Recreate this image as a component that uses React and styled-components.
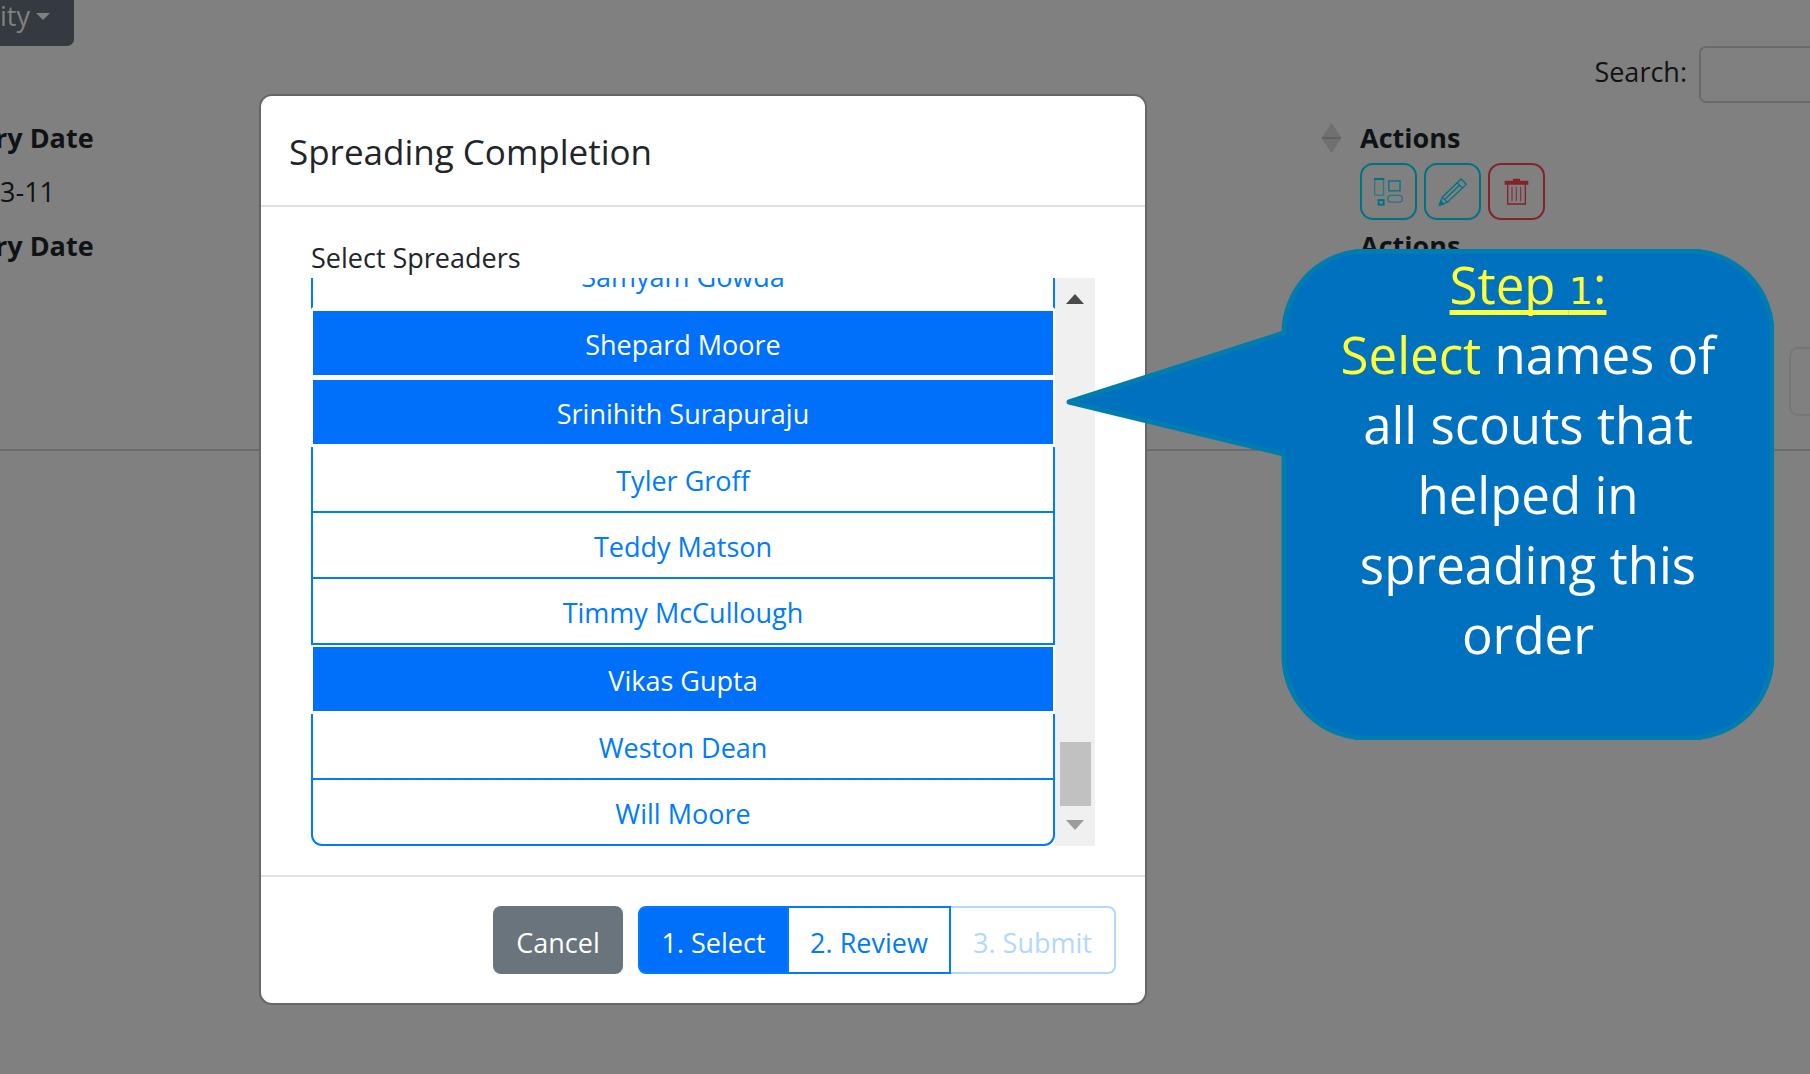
import React, { useState } from "react";
import styled, { createGlobalStyle, css } from "styled-components";

const GlobalStyle = createGlobalStyle`
  *, *::before, *::after { box-sizing: border-box; }
  body {
    margin: 0;
    background: #808080;
    color: #101315;
    font-family: "Open Sans", "Noto Sans", sans-serif;
    font-size: 27px;
    line-height: 40px;
  }
  button, input { font: inherit; color: inherit; }
`;

const Page = styled.div`
  position: relative;
  min-height: 100vh;
  overflow: hidden;
`;

const Toolbar = styled.header`
  display: flex;
`;

const ActivityButton = styled.button`
  display: flex;
  align-items: center;
  gap: 6px;
  height: 46px;
  padding: 0 24px 14px 0;
  border: 0;
  border-radius: 0 0 7px 0;
  background: #343a3f;
  color: #808080;
`;

const Caret = styled.span`
  border: 7px solid transparent;
  border-top-color: #808080;
  border-bottom: 0;
`;

const SearchRow = styled.label`
  display: flex;
  justify-content: flex-end;
  gap: 12px;
  line-height: 52px;
`;

const SearchInput = styled.input`
  width: 111px;
  height: 57px;
  padding: 0 12px;
  border: 2px solid #676b6f;
  border-right: 0;
  border-radius: 7px 0 0 7px;
  background: transparent;
`;

const OrdersTable = styled.table`
  width: 100%;
  margin-top: 9px;
  border-collapse: collapse;
  table-layout: fixed;

  th, td {
    padding: 0;
    height: 51px;
    text-align: left;
    white-space: nowrap;
  }
  th { font-weight: 700; }
  th:first-child { text-indent: -5px; }
  td { height: 57px; }
`;

const ActionsColumn = styled.col`
  width: 488px;
`;

const ActionCell = styled.div`
  display: flex;
  align-items: center;
  gap: 7px;
  padding-left: ${(p) => (p.$sortable ? 0 : 38)}px;
`;

const SortIcon = styled.svg`
  width: 19px;
  height: 30px;
  margin-right: 12px;
`;

const IconButton = styled.button`
  display: flex;
  align-items: center;
  justify-content: center;
  width: 57px;
  height: 57px;
  padding: 0;
  border: 2px solid ${(p) => (p.$danger ? "#84212b" : "#007383")};
  border-radius: 13px;
  background: transparent;
  color: ${(p) => (p.$danger ? "#84212b" : "#007383")};
`;

const Pagination = styled.nav`
  display: flex;
  justify-content: flex-end;
  margin-top: 76px;
  padding-bottom: 33px;
  border-bottom: 2px solid #6b6b6b;
`;

const PageButton = styled.button`
  width: 21px;
  height: 69px;
  border: 2px solid #74777a;
  border-right: 0;
  border-radius: 9px 0 0 9px;
  background: transparent;
`;

const Overlay = styled.div`
  position: absolute;
  inset: 0;
  display: flex;
  align-items: flex-start;
  padding: 96px 0 0 261px;
`;

const Modal = styled.section`
  width: 884px;
  border-radius: 11px;
  background: #fff;
  color: #212529;
  box-shadow: 0 0 0 2px #666;
  overflow: hidden;
`;

const ModalHeader = styled.header`
  padding: 32px 28px 29px;
  border-bottom: 2px solid #dee2e6;
`;

const ModalTitle = styled.h1`
  margin: 0;
  font-size: 35px;
  font-weight: 400;
  line-height: 48px;
`;

const ModalBody = styled.fieldset`
  margin: 0;
  padding: 31px 50px 29px;
  border: 0;
`;

const ListLabel = styled.div`
`;

const Scroller = styled.div`
  display: flex;
  height: 568px;
`;

const NameList = styled.div`
  flex: 1;
  display: flex;
  flex-direction: column;
  justify-content: flex-end;
  overflow: hidden;
`;

const NameOption = styled.label`
  position: relative;
  flex: none;
  height: 66px;
  border: 2px solid #007bff;
  border-top: 0;
  color: #007bff;
  line-height: 68px;
  text-align: center;
  cursor: pointer;

  &:last-child { border-radius: 0 0 11px 11px; }

  ${(p) => p.$open && css`
    border-bottom-color: #fff;
  `}
  ${(p) => p.$selected && css`
    height: 69px;
    border-color: #fff;
    border-top: 2px solid #fff;
    border-bottom-width: 3px;
    background: #0070fb;
    color: #fff;
  `}
`;

const HiddenCheckbox = styled.input`
  position: absolute;
  inset: 0;
  margin: 0;
  opacity: 0;
`;

const ScrollTrack = styled.div`
  display: flex;
  flex-direction: column;
  align-items: center;
  justify-content: space-between;
  width: 40px;
  padding: 16px 0 16px;
  background: #f0f0f0;
`;

const ScrollArrow = styled.span`
  border: 9px solid transparent;
  border-width: ${(p) => (p.$up ? "0 9px 10px" : "10px 9px 0")};
  border-top-color: #9c9c9c;
  border-bottom-color: #4a4a4a;
`;

const ScrollThumb = styled.span`
  width: 31px;
  height: 64px;
  margin: auto 0 14px;
  background: #c1c1c1;
`;

const ModalFooter = styled.footer`
  display: flex;
  justify-content: flex-end;
  gap: 15px;
  padding: 29px;
  border-top: 2px solid #dee2e6;
`;

const CancelButton = styled.button`
  width: 130px;
  height: 68px;
  padding: 6px 0 0;
  border: 0;
  border-radius: 8px;
  background: #6a747c;
  color: #fff;
`;

const Steps = styled.div`
  display: flex;
`;

const StepButton = styled.button`
  width: ${(p) => p.$width}px;
  height: 68px;
  padding: 6px 0 0;
  border: 2px solid #007bff;
  background: ${(p) => (p.$active ? "#0070fb" : "#fff")};
  color: ${(p) => (p.$active ? "#fff" : "#007bff")};

  &:first-child { border-radius: 8px 0 0 8px; }
  &:last-child { border-left: 0; border-radius: 0 8px 8px 0; }
  & + & { border-left: 0; }
  &:disabled { border-color: #b3d7ff; color: #b3d7ff; }
`;

const Callout = styled.aside`
  position: absolute;
  top: 249px;
  right: 36px;
  width: 492px;
  height: 491px;
`;

const CalloutShape = styled.svg`
  position: absolute;
  top: 0;
  right: 0;
  width: 708px;
  height: 491px;
`;

const CalloutText = styled.p`
  position: relative;
  margin: 0;
  color: #fff;
  font-size: 51px;
  font-weight: 500;
  line-height: 70px;
  text-align: center;
`;

const Highlight = styled.span`
  color: #ffff38;
`;

const StepHeading = styled(Highlight)`
  text-decoration: underline;
  text-decoration-thickness: 5px;
  text-decoration-skip-ink: none;
  text-underline-offset: 6px;
`;

const OldStyleDigit = styled.span`
  font-family: "DejaVu Sans", sans-serif;
  font-size: 38px;
  line-height: 1;
`;

const names = [
  "Samyam Gowda",
  "Shepard Moore",
  "Srinihith Surapuraju",
  "Tyler Groff",
  "Teddy Matson",
  "Timmy McCullough",
  "Vikas Gupta",
  "Weston Dean",
  "Will Moore",
];

function BoardIcon() {
  return (
    <svg width="31" height="29" viewBox="104 78 92 88" fill="none" stroke="currentColor" strokeWidth="4" aria-hidden="true">
      <rect x="108" y="84" width="27" height="49" opacity=".65" />
      <path d="M106 84h31" strokeWidth="6" />
      <rect x="151" y="90" width="34" height="30" />
      <rect x="148" y="134" width="44" height="20" rx="10" opacity=".75" />
      <rect x="120" y="148" width="15" height="14" strokeWidth="6" />
    </svg>
  );
}

function PencilIcon() {
  return (
    <svg width="30" height="30" viewBox="296 78 92 90" fill="none" stroke="currentColor" strokeWidth="4" aria-hidden="true">
      <path d="M367 83 383 99 325 154 301 163 309 139ZM354 94 371 111M309 139 325 154M316 147 361 103" />
      <path d="M300 164 304 151 313 160Z" fill="currentColor" />
    </svg>
  );
}

function TrashIcon() {
  return (
    <svg width="25" height="28" viewBox="493 78 75 84" fill="none" stroke="currentColor" strokeWidth="4" aria-hidden="true">
      <path d="M520 80h21v6h25v12h-71V86h25z" fill="currentColor" stroke="none" />
      <path d="M504 98v58h53V98" />
      <path d="M517 104v44M530 104v44M543 104v44" strokeWidth="4" opacity=".75" />
    </svg>
  );
}

export default function App() {
  const [selected, setSelected] = useState([
    "Shepard Moore",
    "Srinihith Surapuraju",
    "Vikas Gupta",
  ]);

  const toggle = (name) =>
    setSelected((list) =>
      list.includes(name) ? list.filter((n) => n !== name) : [...list, name]
    );

  return (
    <Page>
      <GlobalStyle />
      <Toolbar>
        <ActivityButton type="button">
          ity
          <Caret />
        </ActivityButton>
      </Toolbar>
      <SearchRow>
        Search:
        <SearchInput type="search" />
      </SearchRow>
      <OrdersTable>
        <colgroup>
          <col />
          <ActionsColumn />
        </colgroup>
        <thead>
          <tr>
            <th scope="col">ry Date</th>
            <th scope="col">
              <ActionCell $sortable>
                <SortIcon viewBox="0 0 19 30" aria-hidden="true">
                  <path d="M9.500 0 19 14H0zM0 16h19L9.500 30z" fill="#707070" />
                  <path d="M0 15h19" stroke="#606060" strokeWidth="2" />
                </SortIcon>
                Actions
              </ActionCell>
            </th>
          </tr>
        </thead>
        <tbody>
          <tr>
            <td>3-11</td>
            <td>
              <ActionCell>
                <IconButton type="button" aria-label="Spreading"><BoardIcon /></IconButton>
                <IconButton type="button" aria-label="Edit"><PencilIcon /></IconButton>
                <IconButton type="button" aria-label="Delete" $danger><TrashIcon /></IconButton>
              </ActionCell>
            </td>
          </tr>
        </tbody>
        <tfoot>
          <tr>
            <th>ry Date</th>
            <th><ActionCell>Actions</ActionCell></th>
          </tr>
        </tfoot>
      </OrdersTable>
      <Pagination aria-label="Pages">
        <PageButton type="button" aria-label="Previous" />
      </Pagination>

      <Overlay>
        <Modal role="dialog" aria-labelledby="dialog-title">
          <ModalHeader>
            <ModalTitle id="dialog-title">Spreading Completion</ModalTitle>
          </ModalHeader>
          <ModalBody aria-labelledby="spreaders-label">
            <ListLabel id="spreaders-label">Select Spreaders</ListLabel>
            <Scroller>
              <NameList>
                {names.map((name, i) => (
                  <NameOption key={name} $selected={selected.includes(name)} $open={i === 0}>
                    <HiddenCheckbox
                      type="checkbox"
                      checked={selected.includes(name)}
                      onChange={() => toggle(name)}
                    />
                    {name}
                  </NameOption>
                ))}
              </NameList>
              <ScrollTrack aria-hidden="true">
                <ScrollArrow $up />
                <ScrollThumb />
                <ScrollArrow />
              </ScrollTrack>
            </Scroller>
          </ModalBody>
          <ModalFooter>
            <CancelButton type="button">Cancel</CancelButton>
            <Steps>
              <StepButton type="button" $width={151} $active>1. Select</StepButton>
              <StepButton type="button" $width={162}>2. Review</StepButton>
              <StepButton type="button" $width={165} disabled>3. Submit</StepButton>
            </Steps>
          </ModalFooter>
        </Modal>
      </Overlay>

      <Callout>
        <CalloutShape viewBox="0 0 708 491" aria-hidden="true">
          <path
            d="M218 84A82 82 0 0 1 300 2H624A82 82 0 0 1 706 84V407A82 82 0 0 1 624 489H300A82 82 0 0 1 218 407V205L3 153 218 84Z"
            fill="#0071bf"
            stroke="#007cae"
            strokeWidth="5"
            strokeLinejoin="round"
          />
        </CalloutShape>
        <CalloutText>
          <StepHeading>Step <OldStyleDigit>1</OldStyleDigit>:</StepHeading>
          <br />
          <Highlight>Select</Highlight> names of
          <br />
          all scouts that
          <br />
          helped in
          <br />
          spreading this
          <br />
          order
        </CalloutText>
      </Callout>
    </Page>
  );
}
